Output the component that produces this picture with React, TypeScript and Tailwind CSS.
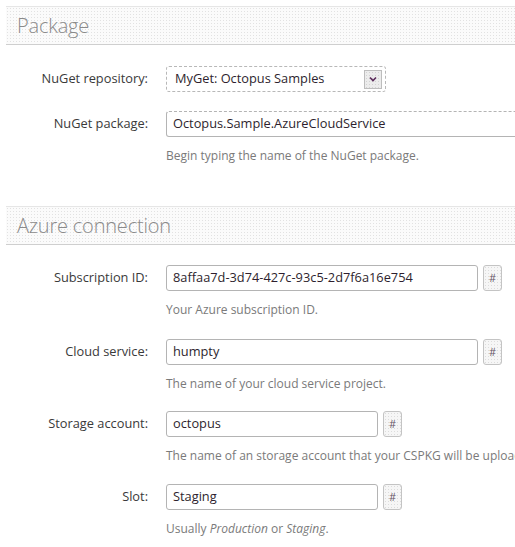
import React from "react";

const font = { fontFamily: '"Open Sans", "Noto Sans", sans-serif' };

function SectionHeader({ title }: { title: string }) {
  return (
    <div className="ml-[6px] h-[39px] border-t border-b border-t-[#e6e6e6] border-b-[#cfcfcf] bg-[#fbfbfb] bg-[radial-gradient(#e2e2e2_0.8px,transparent_0.9px)] bg-[length:3px_3px] flex items-center pl-[11px]">
      <span className="text-[20px] font-light text-[#8a8a8a] tracking-[-0.2px]">{title}</span>
    </div>
  );
}

function HashButton() {
  return (
    <button className="ml-[5px] shrink-0 w-[19px] h-[26px] rounded-[3px] border border-[#c4c4c4] bg-[#f6f6f6] bg-[radial-gradient(#dcdcdc_0.8px,transparent_0.9px)] bg-[length:3px_3px] text-[11px] text-[#6b5a6b] flex items-center justify-center">
      #
    </button>
  );
}

function Row({ label, children }: { label: string; children: React.ReactNode }) {
  return (
    <div className="flex items-center h-[26px]">
      <label className="w-[148px] shrink-0 text-right text-[12.8px] text-[#3a3a3a]">{label}</label>
      <div className="ml-[18px] flex items-center shrink-0">{children}</div>
    </div>
  );
}

function Help({ children }: { children: React.ReactNode }) {
  return (
    <p className="ml-[166px] mt-[11px] h-[16px] leading-[16px] text-[12px] text-[#7a7a7a] whitespace-nowrap">
      {children}
    </p>
  );
}

function TextBox({ value, width }: { value: string; width: string }) {
  return (
    <div className={`${width} shrink-0 h-[26px] rounded-[3px] border border-[#b4b4b4] bg-white px-[6px] flex items-center text-[12.8px] text-[#2e1f2e] whitespace-nowrap overflow-hidden`}>
      {value}
    </div>
  );
}

export default function App() {
  return (
    <div className="w-[515px] h-[547px] bg-white overflow-hidden pt-[6px]" style={font}>
      <SectionHeader title="Package" />

      <div className="mt-[21px]">
        <Row label="NuGet repository:">
          <div className="w-[220px] h-[26px] rounded-[3px] border border-dashed border-[#b8b8b8] bg-white flex items-center justify-between pl-[8px] pr-[3px] text-[12.8px] text-[#2e1f2e]">
            <span>MyGet: Octopus Samples</span>
            <span className="w-[18px] h-[19px] border border-[#bdbdbd] bg-[#ececec] bg-[radial-gradient(#d2d2d2_0.8px,transparent_0.9px)] bg-[length:3px_3px] flex items-center justify-center">
              <svg width="8" height="6" viewBox="0 0 8 6">
                <path d="M1 1.5 L4 4.5 L7 1.5" stroke="#5a2a5a" strokeWidth="1.6" fill="none" />
              </svg>
            </span>
          </div>
        </Row>
      </div>

      <div className="mt-[19px]">
        <Row label="NuGet package:">
          <div className="w-[360px] h-[26px] rounded-l-[3px] border border-[#b4b4b4] [border-top-style:dashed] bg-white px-[6px] flex items-center text-[12.8px] text-[#2e1f2e] whitespace-nowrap">
            Octopus.Sample.AzureCloudService
          </div>
        </Row>
        <Help>Begin typing the name of the NuGet package.</Help>
      </div>

      <div className="mt-[42px]">
        <SectionHeader title="Azure connection" />
      </div>

      <div className="mt-[20px]">
        <Row label="Subscription ID:">
          <TextBox value="8affaa7d-3d74-427c-93c5-2d7f6a16e754" width="w-[312px]" />
          <HashButton />
        </Row>
        <Help>Your Azure subscription ID.</Help>
      </div>

      <div className="mt-[21px]">
        <Row label="Cloud service:">
          <TextBox value="humpty" width="w-[312px]" />
          <HashButton />
        </Row>
        <Help>The name of your cloud service project.</Help>
      </div>

      <div className="mt-[19px]">
        <Row label="Storage account:">
          <TextBox value="octopus" width="w-[212px]" />
          <HashButton />
        </Row>
        <Help>The name of an storage account that your CSPKG will be uploaded to.</Help>
      </div>

      <div className="mt-[20px]">
        <Row label="Slot:">
          <TextBox value="Staging" width="w-[212px]" />
          <HashButton />
        </Row>
        <Help>
          Usually <em>Production</em> or <em>Staging</em>.
        </Help>
      </div>
    </div>
  );
}
